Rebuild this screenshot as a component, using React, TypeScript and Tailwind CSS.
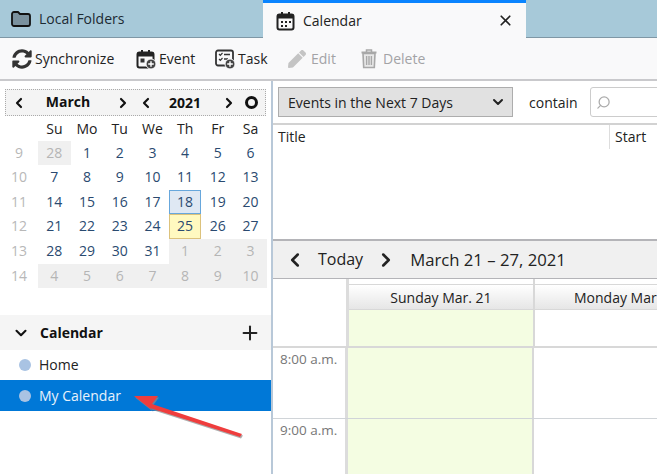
import { ChevronDown, ChevronLeft, ChevronRight, Plus, Search, X } from "lucide-react"
import { FaPen, FaSyncAlt } from "react-icons/fa"
import type { ReactNode } from "react"

const font = { fontFamily: '"Open Sans", "Noto Sans", sans-serif' }

function CalIcon({ plus }: { plus?: boolean }) {
  return (
    <svg width="20" height="20" viewBox="0 0 20 20" className="shrink-0">
      <rect x="1.5" y="3.5" width="16" height="15" rx="2" fill="none" stroke="#222" strokeWidth="2" />
      <rect x="1.5" y="3.5" width="16" height="4" fill="#222" />
      <rect x="5" y="1" width="2" height="4" fill="#222" />
      <rect x="12" y="1" width="2" height="4" fill="#222" />
      {plus ? (
        <>
          <rect x="4.5" y="9.5" width="4" height="4" fill="#333" />
          <circle cx="15" cy="15" r="5" fill="#444" stroke="#f9f9fa" strokeWidth="1" />
          <path d="M15 12.2v5.6M12.2 15h5.6" stroke="#fff" strokeWidth="1.4" />
        </>
      ) : (
        <path d="M5 10h2v2H5zM9 10h2v2H9zM13 10h2v2h-2zM5 14h2v2H5zM9 14h2v2H9z" fill="#222" />
      )}
    </svg>
  )
}

function TaskIcon() {
  return (
    <svg width="20" height="20" viewBox="0 0 20 20" className="shrink-0">
      <rect x="1" y="1.5" width="17" height="15" rx="2" fill="none" stroke="#333" strokeWidth="1.8" />
      <path d="M4 5l1.3 1.3L7.5 4M4 10l1.3 1.3L7.5 9" fill="none" stroke="#333" strokeWidth="1.2" />
      <path d="M9 5.5h6M9 10h4" stroke="#333" strokeWidth="1.4" />
      <circle cx="15" cy="15" r="5" fill="#444" stroke="#f9f9fa" strokeWidth="1" />
      <path d="M15 12.2v5.6M12.2 15h5.6" stroke="#fff" strokeWidth="1.4" />
    </svg>
  )
}

function TrashIcon() {
  return (
    <svg width="16" height="20" viewBox="0 0 16 20" className="shrink-0">
      <path d="M0.5 3.5h15" stroke="#a8a8a8" strokeWidth="2" />
      <path d="M5.5 3V1h5v2" fill="none" stroke="#a8a8a8" strokeWidth="1.5" />
      <path d="M2 4.5h12l-.7 14H2.7z" fill="#e8e8e8" stroke="#a8a8a8" strokeWidth="1.6" />
      <path d="M5.6 7v9M8 7v9M10.4 7v9" stroke="#a8a8a8" strokeWidth="1.4" />
    </svg>
  )
}

function ToolButton({ icon, label, off, className }: { icon: ReactNode; label: string; off?: boolean; className: string }) {
  return (
    <div className={`flex items-center ${off ? "text-[#a3a3a6]" : "text-[#222]"} ${className}`}>
      {icon}
      <span>{label}</span>
    </div>
  )
}

const weeks = [
  { n: 9, days: [28, 1, 2, 3, 4, 5, 6] },
  { n: 10, days: [7, 8, 9, 10, 11, 12, 13] },
  { n: 11, days: [14, 15, 16, 17, 18, 19, 20] },
  { n: 12, days: [21, 22, 23, 24, 25, 26, 27] },
  { n: 13, days: [28, 29, 30, 31, 1, 2, 3] },
  { n: 14, days: [4, 5, 6, 7, 8, 9, 10] },
]

function MiniMonth() {
  return (
    <div className="grid grid-cols-[38px_repeat(7,32.7px)] auto-rows-[24.6px] items-stretch text-center text-[14px] leading-[24.6px]">
      <div />
      {["Su", "Mo", "Tu", "We", "Th", "Fr", "Sa"].map((d) => (
        <div key={d} className="pt-[1px] text-[#222]">{d}</div>
      ))}
      {weeks.map((w, wi) => (
        <div key={w.n} className="contents">
          <div className="text-[#b8b8b8]">{w.n}</div>
          {w.days.map((d, di) => {
            const other = (wi === 0 && di === 0) || (wi === 4 && di > 3) || wi === 5
            let cls = other ? "bg-[#f0f0f0] text-[#b5b5b5]" : "text-[#2a4a70]"
            if (wi === 2 && di === 4) cls = "border border-[#67a7dc] bg-[#dfe8f3] text-[#2a4a70] leading-[22.6px]"
            if (wi === 3 && di === 4) cls = "border border-[#dcc27c] bg-[#fff9c0] text-[#2a4a70] leading-[22.6px]"
            return <div key={di} className={cls}>{d}</div>
          })}
        </div>
      ))}
    </div>
  )
}

export default function App() {
  return (
    <div className="relative flex h-[474px] w-[657px] flex-col overflow-hidden bg-white" style={font}>
      {/* tabs */}
      <div className="flex h-[38px] shrink-0 bg-[#a7c9d9]">
        <div className="flex w-[263px] items-center gap-[8px] border-b border-[#7f97a5] pl-[11px] text-[14px] text-[#1c2a33]">
          <svg width="20" height="16" viewBox="0 0 20 16">
            <path d="M1 3a2 2 0 0 1 2-2h4l2 2h8a2 2 0 0 1 2 2v8a2 2 0 0 1-2 2H3a2 2 0 0 1-2-2z" fill="#7a919e" stroke="#111" strokeWidth="1.8" />
          </svg>
          Local Folders
        </div>
        <div className="flex w-[263px] items-center gap-[7px] border-t-[3px] border-[#0a84ff] bg-[#f9f9fa] pl-[13px] pr-[12px] text-[14px] text-[#222]">
          <CalIcon />
          <span className="flex-1">Calendar</span>
          <X size={17} strokeWidth={2.4} />
        </div>
        <div className="flex-1 border-b border-[#7f97a5]" />
      </div>
      {/* toolbar */}
      <div className="flex h-[43px] shrink-0 items-center border-b-2 border-[#c9c9cc] bg-[#f9f9fa] pl-[12px] text-[14px]">
        <ToolButton className="w-[124px] gap-[3px]" icon={<FaSyncAlt size={20} color="#333" />} label="Synchronize" />
        <ToolButton className="w-[79px] gap-[3px]" icon={<CalIcon plus />} label="Event" />
        <ToolButton className="w-[73px] gap-[3px]" icon={<TaskIcon />} label="Task" />
        <ToolButton className="w-[73px] gap-[5px]" off icon={<FaPen size={18} color="#c4c4c4" />} label="Edit" />
        <ToolButton className="gap-[6px]" off icon={<TrashIcon />} label="Delete" />
      </div>
      <div className="flex min-h-0 flex-1">
        {/* left pane */}
        <div className="flex w-[273px] shrink-0 flex-col border-r-2 border-[#b8c8d8] pt-[8px]">
          <div className="mx-[5px] flex h-[27px] items-center border border-dotted border-[#aaa] bg-[#f4f4f4] text-[14px] font-bold text-[#111]">
            <ChevronLeft size={16} strokeWidth={3.2} className="ml-[5px]" />
            <span className="mb-[2px] w-[82px] text-center">March</span>
            <ChevronRight size={16} strokeWidth={3.2} className="ml-[6px]" />
            <ChevronLeft size={16} strokeWidth={3.2} className="ml-[7px]" />
            <span className="w-[62px] text-center">2021</span>
            <ChevronRight size={16} strokeWidth={3.2} className="ml-[5px]" />
            <span className="ml-[8px] h-[13px] w-[13px] rounded-full border-[3px] border-[#111]" />
          </div>
          <MiniMonth />
          <div className="mt-[27px] flex h-[35px] items-center bg-[#f5f5f5] pl-[12px] pr-[10px] text-[14px] font-bold text-[#111]">
            <ChevronDown size={18} strokeWidth={2.8} />
            <span className="ml-[10px] flex-1">Calendar</span>
            <Plus size={22} strokeWidth={2.2} color="#222" />
          </div>
          <div className="flex h-[30px] items-center pb-[1px] pl-[19px] text-[14px] text-[#222]">
            <span className="mr-[8px] h-[12px] w-[12px] rounded-full bg-[#a9c3e3]" />
            Home
          </div>
          <div className="flex h-[31px] items-center bg-[#0078d7] pl-[19px] text-[14px] text-[#e8f2fb]">
            <span className="mr-[8px] h-[12px] w-[12px] rounded-full bg-[#a9c3e3]" />
            My Calendar
          </div>
        </div>
        {/* right pane */}
        <div className="flex min-w-0 flex-1 flex-col">
          <div className="flex h-[44px] shrink-0 items-center border-b-2 border-[#d2d2d2] pl-[5px] text-[14px] text-[#222]">
            <div className="flex h-[30px] w-[235px] shrink-0 items-center justify-between border border-[#adadad] bg-[#e1e1e1] pl-[9px] pr-[6px]">
              <span>Events in the Next 7 Days</span>
              <ChevronDown size={16} strokeWidth={3} />
            </div>
            <span className="ml-[16px]">contain</span>
            <div className="ml-[12px] flex h-[30px] w-[80px] shrink-0 items-center rounded-[3px] border border-[#ccc] bg-white pl-[5px]">
              <Search size={15} color="#aaa" className="-scale-x-100" />
            </div>
          </div>
          <div className="flex h-[116px] shrink-0 items-start border-b-2 border-[#b4b4b8] pl-[5px] text-[14px] text-[#222]">
            <span className="w-[331px] leading-[24px]">Title</span>
            <span className="border-l border-[#ddd] pl-[5px] leading-[24px]">Start</span>
          </div>
          <div className="flex h-[38px] shrink-0 items-center border-b border-[#b4b4b8] bg-[#f0f0f0] pl-[11px] text-[#222]">
            <ChevronLeft size={22} strokeWidth={2.8} />
            <span className="mb-[2px] ml-[12px] text-[16px]">Today</span>
            <ChevronRight size={22} strokeWidth={2.8} className="ml-[12px]" />
            <span className="ml-[13px] text-[16.7px]">March 21 – 27, 2021</span>
          </div>
          <div className="min-h-0 flex-1 overflow-hidden">
            <div className="flex h-[69px] border-b-2 border-[#d8d8d8]">
              <div className="w-[76px] shrink-0 border-r-[3px] border-[#dcdcdc]" />
              <div className="w-[186px] shrink-0 border-r-2 border-[#d8d8d8]">
                <div className="mt-[5px] flex h-[26px] items-center justify-center border-y border-[#d8d8d8] bg-gradient-to-b from-white to-[#e6e6e6] text-[14px] text-[#222]">
                  Sunday Mar. 21
                </div>
                <div className="h-[36px] bg-[#f4fde2]" />
              </div>
              <div className="w-[200px] shrink-0">
                <div className="mt-[5px] flex h-[26px] items-center whitespace-nowrap border-y border-[#d8d8d8] bg-gradient-to-b from-white to-[#e6e6e6] pl-[39px] text-[14px] text-[#222]">
                  Monday Mar. 22
                </div>
              </div>
            </div>
            {["8:00 a.m.", "9:00 a.m."].map((t) => (
              <div key={t} className="flex h-[71px] border-b border-[#d0d4d8]">
                <div className="w-[75px] shrink-0 border-r-[3px] border-[#dcdcdc] pl-[7px] pt-[1px] text-[13.5px] text-[#777]">{t}</div>
                <div className="w-[186px] shrink-0 border-r-2 border-[#d8d8d8] bg-[#f4fde2]" />
              </div>
            ))}
          </div>
        </div>
      </div>
      {/* annotation arrow */}
      <svg className="absolute left-0 top-0" width="657" height="474" viewBox="0 0 657 474">
        <g transform="translate(1 1.5)" fill="#8a8a8a" opacity="0.7">
          <path d="M134 396 L158 396 L152 404 L242 434 L240 437 L150 408 L153 411 Z" />
        </g>
        <path d="M134 396 L158 396 L152 404 L242 434 L240 437 L150 408 L153 411 Z" fill="#ef3d3d" />
      </svg>
    </div>
  )
}
